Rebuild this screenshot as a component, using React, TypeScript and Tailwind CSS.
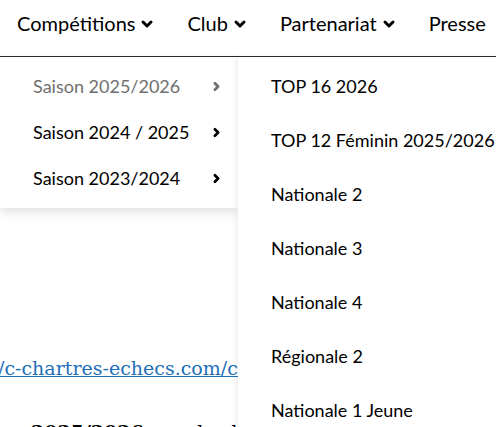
import { ChevronDown, ChevronRight } from 'lucide-react';

const navItems = [
  { label: 'Compétitions', hasMenu: true },
  { label: 'Club', hasMenu: true },
  { label: 'Partenariat', hasMenu: true },
  { label: 'Presse', hasMenu: false },
];

const seasons = [
  { label: 'Saison 2025/2026', active: true },
  { label: 'Saison 2024 / 2025', active: false },
  { label: 'Saison 2023/2024', active: false },
];

const teams = [
  'TOP 16 2026',
  'TOP 12 Féminin 2025/2026',
  'Nationale 2',
  'Nationale 3',
  'Nationale 4',
  'Régionale 2',
  'Nationale 1 Jeune',
];

export default function App() {
  return (
    <div className="relative h-[427px] w-[496px] overflow-hidden bg-white font-['Lato','Noto_Sans',sans-serif] text-black">
      <nav className="flex h-[57px] items-center gap-[32px] whitespace-nowrap border-b border-[#2a2a2a] pb-[11px] pl-[17px] text-[20px]">
        {navItems.map((item) => (
          <div key={item.label} className="flex items-center gap-[4px]">
            <span>{item.label}</span>
            {item.hasMenu && <ChevronDown className="mt-[2px] h-[16px] w-[16px]" strokeWidth={4.5} />}
          </div>
        ))}
      </nav>

      <main className="pt-[297px] font-['DejaVu_Serif',serif]">
        <a className="-ml-[2px] block whitespace-nowrap text-[19px] text-[#1e6fb8] underline">
          /c-chartres-echecs.com/chartres
        </a>
        <p className="mt-[35px] whitespace-nowrap pl-[31px] text-[19px]">
          <strong>2025/2026</strong> sera le championnat
        </p>
      </main>

      <div className="absolute left-0 top-[57px] w-[238px] bg-white pt-[6px] pb-[7px] text-[18px] shadow-[0_4px_10px_rgba(0,0,0,0.12)]">
        {seasons.map((s) => (
          <div
            key={s.label}
            className={`flex h-[46px] items-center justify-between pl-[33px] pr-[15px] ${s.active ? 'text-[#6f6f6f]' : ''}`}
          >
            <span>{s.label}</span>
            <ChevronRight className="h-[13px] w-[13px]" strokeWidth={5} />
          </div>
        ))}
      </div>

      <div className="absolute left-[238px] top-[57px] w-[280px] bg-white pt-[2px] text-[18px] shadow-[-3px_0_6px_rgba(0,0,0,0.06)]">
        {teams.map((t) => (
          <div key={t} className="flex h-[54px] items-center whitespace-nowrap pl-[33px]">
            {t}
          </div>
        ))}
      </div>
    </div>
  );
}
